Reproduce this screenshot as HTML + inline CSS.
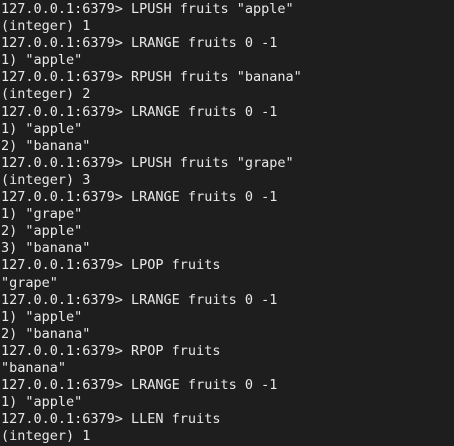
<!DOCTYPE html>
<html><head><meta charset="utf-8"><style>
html,body{margin:0;padding:0;background:#1e1e1e;width:454px;height:446px;overflow:hidden}
pre{margin:0;padding:0 0 0 1px;font-family:"DejaVu Sans Mono","Liberation Mono",monospace;font-size:13.5px;line-height:17.1px;color:#e8e8e8;position:relative;top:1px}
</style></head><body><pre>127.0.0.1:6379&gt; LPUSH fruits "apple"
(integer) 1
127.0.0.1:6379&gt; LRANGE fruits 0 -1
1) "apple"
127.0.0.1:6379&gt; RPUSH fruits "banana"
(integer) 2
127.0.0.1:6379&gt; LRANGE fruits 0 -1
1) "apple"
2) "banana"
127.0.0.1:6379&gt; LPUSH fruits "grape"
(integer) 3
127.0.0.1:6379&gt; LRANGE fruits 0 -1
1) "grape"
2) "apple"
3) "banana"
127.0.0.1:6379&gt; LPOP fruits
"grape"
127.0.0.1:6379&gt; LRANGE fruits 0 -1
1) "apple"
2) "banana"
127.0.0.1:6379&gt; RPOP fruits
"banana"
127.0.0.1:6379&gt; LRANGE fruits 0 -1
1) "apple"
127.0.0.1:6379&gt; LLEN fruits
(integer) 1</pre></body></html>
